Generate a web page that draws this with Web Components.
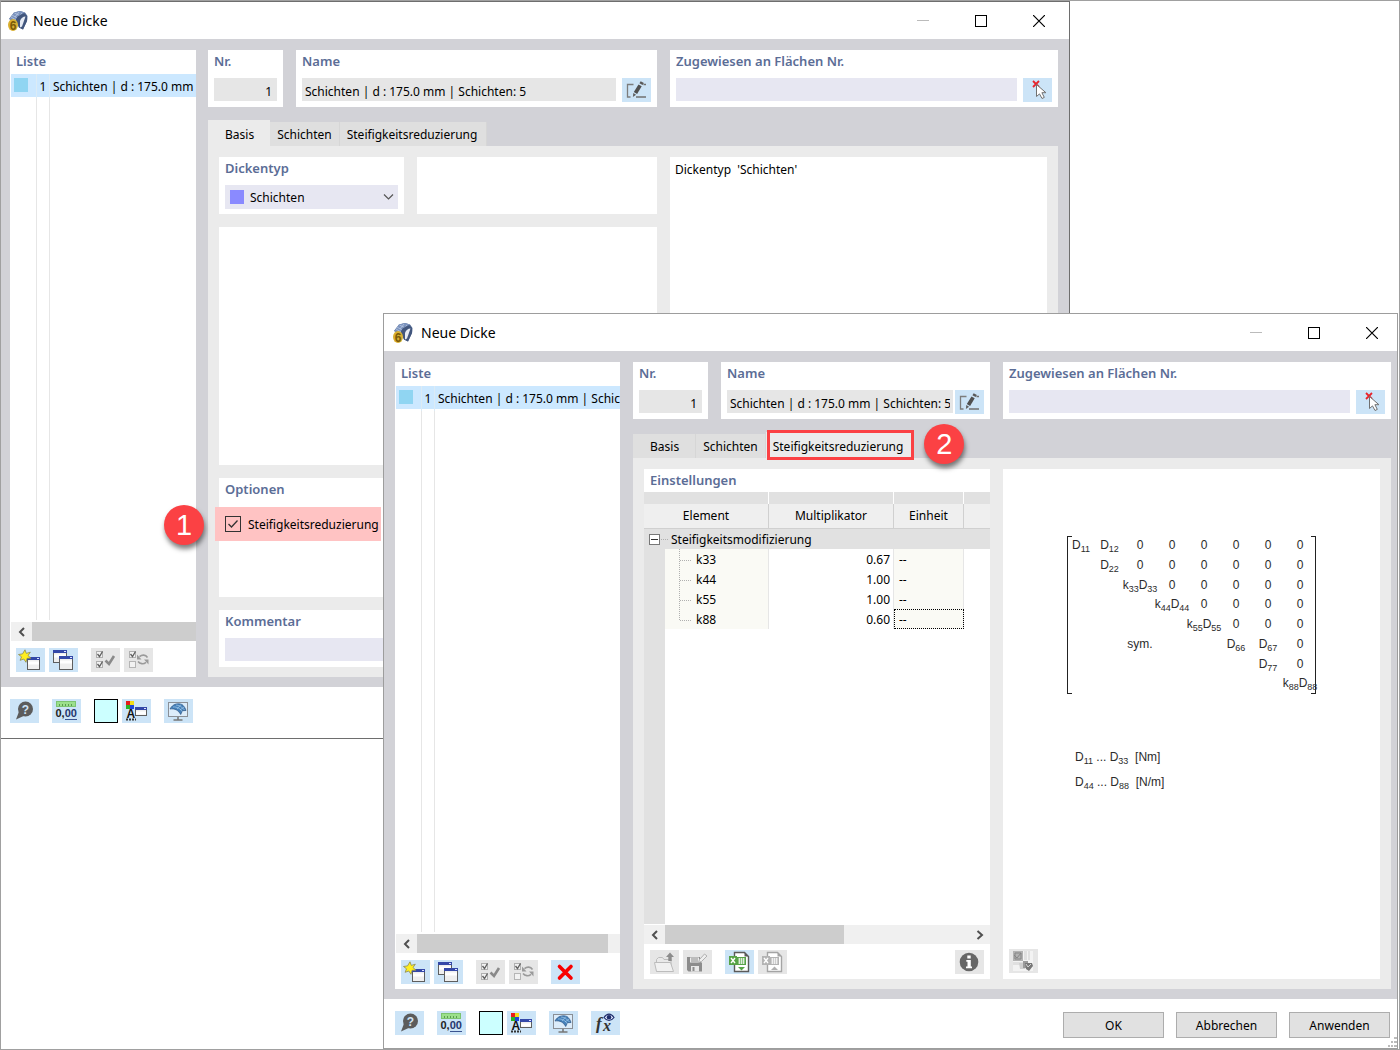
<!DOCTYPE html>
<html lang="de">
<head>
<meta charset="utf-8">
<title>Neue Dicke</title>
<style>
  html, body { margin: 0; min-height: 100%; background: #fff; }
  body { font: 12px/20px "Noto Sans", "Open Sans", sans-serif; color: #000; }
</style>
</head>
<body>
<thickness-desktop></thickness-desktop>

<script>
const BASE = `
  :host { display: block; box-sizing: border-box; min-width: 0; }
  *, *::before, *::after { box-sizing: border-box; }
  button, input, select { font: inherit; color: inherit; margin: 0; border: 0; border-radius: 0; padding: 0; }
  label, h2, h3 { margin: 0; }
  .caption { display: block; height: 23px; padding: 0 6px; font-size: 13px; line-height: 23px; font-weight: 600; color: #5b6d96; white-space: nowrap; }
`;

function define(name, css, html) {
  customElements.define(name, class extends HTMLElement {
    connectedCallback() {
      if (this.shadowRoot) return;
      const root = this.attachShadow({ mode: 'open' });
      const markup = typeof html === 'function' ? html(this) : html;
      const template = document.createElement('template');
      template.innerHTML = `<style>${BASE}${css}</style>${markup}`;
      root.append(template.content.cloneNode(true));
    }
  });
}

/* ---------- icons ---------- */
const miniWindow = (x, y, w, h) => `
  <rect x="${x + .5}" y="${y + .5}" width="${w - 1}" height="${h - 1}" fill="#efefef" stroke="#5e5e5e"/>
  <path d="M${x + 1} ${y + 4.5}h${w - 2}v3h-${w - 2}z" fill="#fff"/>
  <rect x="${x}" y="${y}" width="${w}" height="3" fill="#3448a8"/>
  <rect x="${x + w - 3}" y="${y + 1}" width="2" height="1" fill="#dfe4ff"/>`;
const tick = (x, y) => `
  <rect x="${x + .5}" y="${y + .5}" width="6" height="6" fill="#f2f2f2" stroke="#b0b0b0"/>
  <path d="M${x + 1.5} ${y + 3}l2 2.5 3-5" fill="none" stroke="#606060" stroke-width="1.3"/>`;
const sheet = (page, tint) => `
  <path d="M9.500 2.500h10l4 4v15h-14z" fill="#fff" stroke="${page}" stroke-width="1.4"/>
  <path d="M19.500 2.500v4h4z" fill="${page}"/>
  <rect x="11" y="7" width="10" height="8" fill="${tint}"/>
  <path d="M13 9h7M13 11h7M13 13h7M14.500 8v6M16.500 8v6M18.500 8v6" stroke="#fff" stroke-width=".7"/>
  <rect x="4" y="6" width="8" height="9" fill="${tint}"/>
  <path d="M6 8l4 5M10 8l-4 5" stroke="#fff" stroke-width="1.4"/>`;
const ICONS = {
  edit: `<path d="M11.500 6.500h-6V19h3" fill="none" stroke="#7c7c7c" stroke-width="1.3"/><path d="M14 19h10M21.500 6.500h2.500" stroke="#707070" stroke-width="1.3"/>
    <path d="M16.500 6.500l3.200 1.800-4.600 7.600-3.300-1.900z" fill="#505050"/><path d="M17.400 5.200l1.300-2 3.200 1.800-1.300 2z" fill="#5a5a5a"/><path d="M11.300 15l2.800 1.700-3.200 2.300z" fill="#5f5f5f"/>`,
  pick: `<path d="M10 3l6 6M16 3l-6 6" stroke="#e8242b" stroke-width="1.8"/>
    <path d="M13.500 6.500v12l3-2.600 2.500 4.600 2.300-1.100-2.400-4.700h4z" fill="#fff" stroke="#707070"/>`,
  create: `${miniWindow(11, 9, 13, 13)}<path d="M9 1.800l1.300 3.600 4-1.200-2.300 3.400 3 2.600-4 .1-1 4-2.200-3.300-3.700 1.300 1.400-3.500-3-2.300 4-.6z" fill="#ffee20" stroke="#8b8a50" stroke-width=".8"/>`,
  copy: miniWindow(4, 2, 14, 13) + miniWindow(10, 8, 14, 14),
  checkAll: tick(5, 3) + tick(5, 13) + `<path d="M14.500 12.500l3.500 3.500 5-8" fill="none" stroke="#8a8a8a" stroke-width="2.6"/>`,
  toggle: tick(5, 3) + `<rect x="5.500" y="13.500" width="6" height="6" fill="#f2f2f2" stroke="#b5b5b5"/>
    <path d="M23.500 9.500c-2-3-5.500-3-8-.8M14 13.500c2 2.500 5.500 3 8 .8" fill="none" stroke="#9a9a9a" stroke-width="1.600"/><path d="M13 6.500v5h4.500zM24.500 16.500v-5H20z" fill="#9a9a9a"/>`,
  remove: `<path d="M8.500 6.500L20 18M20 6.500L8.500 18" stroke="#f90000" stroke-width="3.600" stroke-linecap="round"/>`,
  help: `<path d="M6 20.500l3-8 5.200 4.300z" fill="#5c5c5c"/><circle cx="15.500" cy="10" r="7.500" fill="#5c5c5c"/>
    <text x="15.500" y="14.500" text-anchor="middle" font-family="Liberation Sans" font-weight="700" font-size="12" fill="#d0e4f6">?</text>`,
  decimals: `<rect x="4.500" y="2.500" width="19" height="5" fill="#9be08c" stroke="#7cc470"/><path d="M7.500 5v2M10.500 5v2M13.500 5v2M16.500 5v2M19.500 5v2" stroke="#5a9b50"/>
    <text x="3.500" y="18" font-family="Liberation Sans" font-size="11" font-weight="700" fill="#222">0,<tspan fill="#24366e">00</tspan></text><path d="M13 20.500h12" stroke="#3a5390"/>`,
  display: `<path d="M4 2h4v4h-4z" fill="#e81c1c"/><path d="M8 2h4v4h-4z" fill="#f4dc18"/><path d="M4 6h4v4h-4z" fill="#28b428"/><path d="M8 6h4v4h-4z" fill="#1f45d8"/>
    <text x="4.500" y="19" font-family="Liberation Sans" font-weight="700" font-size="12" fill="#111">A</text><path d="M4 20.500h10" stroke="#333" stroke-width="2" stroke-dasharray="2 1"/>${miniWindow(13, 8, 12, 9)}`,
  monitor: `<rect x="4.500" y="3.500" width="19" height="14" fill="#dcecfa" stroke="#8a8f96"/><path d="M14 18v3M9.500 21h9" stroke="#777" stroke-width="1.600"/>
    <path d="M6 10C8.500 5 14 3.800 18 5.500c2 1.500 3.500 4 4 6l-3.500.2-1.800 3.800C14.500 11.500 11 9.200 6 10z" fill="#4580ba" stroke="#2b5484" stroke-width=".7"/><path d="M9 8c4-.5 8 2 9.500 5M12 6c3 0 6 2 8.500 5M17 5.500l-4 4.500M20 8l-4 3" stroke="#b4d6f2" stroke-width=".6" fill="none"/>`,
  fx: `<text x="5" y="18" font-family="Liberation Serif" font-style="italic" font-weight="700" font-size="17" fill="#333">f</text>
    <text x="12" y="20" font-family="Liberation Serif" font-style="italic" font-weight="700" font-size="16" fill="#333">x</text>
    <path d="M13 6.500c3-4.500 7-4.500 10 0-3 4-7 4-10 0z" fill="#dfe8ff" stroke="#1d2c6b" stroke-width="1.200"/><circle cx="18" cy="6.300" r="2.300" fill="#1d2c6b"/>`,
  open: `<path d="M6.500 21.500v-12l2-2h4l1.500 2h7v12z" fill="#e9e9e9" stroke="#bcbcbc"/><path d="M6.500 21.500l-2-9h16l3 9z" fill="#f1f1f1" stroke="#bcbcbc"/><path d="M20 2.500l4 4.500h-2.300v4h-3.400V7H16z" fill="#8c8c8c"/>`,
  save: `<path d="M4 7h13v4l2 2v8.500H5.500L4 20z" fill="#8c8c8c"/><path d="M7 7.500h9v5H7z" fill="#ececec"/><path d="M8 9h7M8 11h7" stroke="#8c8c8c"/><path d="M8 16h8v5.500H8z" fill="#e8e8e8"/><path d="M9.500 17h2v4h-2z" fill="#8c8c8c"/>
    <path d="M15.500 12.500l1-3 5-5.500 2.500 2-5.500 5.500z" fill="#eee" stroke="#b0b0b0"/>`,
  importSheet: sheet('#5a5a5a', '#57a347') + `<path d="M13 17h7l-3.500 3.500z" fill="#57a347"/>`,
  exportSheet: sheet('#a4a4a4', '#b4b4b4') + `<path d="M13 20h7l-3.500-3.500z" fill="#b0b0b0"/>`,
  info: `<circle cx="14" cy="12" r="9.300" fill="#666"/><path d="M12.300 5.500h3.400v3h-3.400zM11.300 10h4.500v6.500H17v1.800h-6v-1.800h1.500v-4.700h-1.200z" fill="#fff"/>`,
  image: `<rect x="4" y="2" width="20" height="20" fill="#f3f3f3"/><path d="M15 2h3v9h-3zM19 2h2v9h-2zM4 13h10v3H4z" fill="#e0e0e0"/><rect x="4" y="2" width="10" height="10" fill="#b2b2b2"/><path d="M5 6l3 3 4-5M6 4h6v6H6z" fill="none" stroke="#858585"/>
    <path d="M10 14h6v6h-5z" fill="#d0d0d0"/><path d="M14 12h5v7h-5z" fill="#9b9b9b"/><path d="M16 14h7l1 3-4 5-3-2z" fill="#777"/><path d="M17 15l2 3 3-3" stroke="#d4d4d4" fill="none"/>`
};
define('ui-icon', `:host{width:29px;height:24px} svg{display:block}`,
  el => `<svg width="29" height="24" viewBox="0 0 29 24" aria-hidden="true">${ICONS[el.getAttribute('name')]}</svg>`);

define('icon-button', `
  :host { flex: none; }
  button { display: block; width: 29px; height: 24px; background: #cce4f7; }
  button:disabled { background: #e6e6e6; }`,
  el => `<button type="button" aria-label="${el.getAttribute('label')}" ${el.hasAttribute('off') ? 'disabled' : ''}><ui-icon name="${el.getAttribute('icon')}"></ui-icon></button>`);

define('color-button', `
  :host { flex: none; }
  button { display: block; width: 24px; height: 24px; border: 1px solid #000; background: #ccffff; }`,
  `<button type="button" aria-label="Farbe"></button>`);

define('push-button', `
  button { display: block; width: 101px; height: 26px; padding-top: 2px; border: 1px solid #adadad; background: #e1e1e1; line-height: 22px; }`,
  `<button type="button"><slot></slot></button>`);

define('tool-strip', `
  :host { display: flex; align-items: flex-start; gap: 4px; }
  ::slotted(.apart) { margin-left: 9px; }
  ::slotted(.end) { margin-left: auto; }`, `<slot></slot>`);

/* ---------- window ---------- */
define('app-window', `
  :host { display: flex; flex-direction: column; background: #fff; border: 1px solid #9d9d9d; }
  header { display: flex; align-items: center; height: 37px; flex: none; padding: 0 var(--controls-end) 0 var(--title-start); }
  h2 { flex: 1; padding-left: var(--title-gap); font-size: 14px; line-height: 22px; font-weight: 400; }
  .controls { display: flex; gap: 12px; }
  .controls button { width: 46px; height: 30px; background: none; display: grid; place-items: center; }
  main { flex: 1; min-height: 0; display: flex; background: #d2d2d7; padding: 11px var(--body-end) 10px var(--body-start); gap: var(--body-gap); }
  footer { flex: none; height: var(--footer-height); padding: 12px 7px 10px var(--body-start); display: flex; justify-content: space-between; position: relative; }
  .actions { display: flex; gap: 12px; align-self: flex-end; }
  .grip { position: absolute; right: 0; bottom: 0; }`,
  el => `
  <header>
    <svg width="20" height="20" viewBox="0 0 20 20" aria-hidden="true">
      <path d="M1 8l5-6.500L12 0l5 1.500 2.500 3.500-.5 5-4 8.500-4-2-3-7-5-.5z" fill="#4f6690"/>
      <path d="M6 1.500L12 0l5 1.500-6 2.500zM1 8l5-6.500L11 4 7 9.500z" fill="#7d94bf"/>
      <path d="M4 4l5 3M6.500 2l5 2.500M9 8l5-6M7 6l4-5M3 6l5 3" stroke="#bccbe4" stroke-width=".7"/>
      <path d="M8 10c0-4 3-6.500 8-7 3 1 3.500 3.500 3 7l-4 8.500-4-2z" fill="#42567d"/><path d="M12 10c1-3 3-4.500 5.500-4.500L14 15.500l-2 1z" fill="#e6ebf4"/>
      <ellipse cx="5" cy="14" rx="5" ry="6" fill="#d9b032"/>
      <text x="5" y="18.500" text-anchor="middle" font-family="Liberation Sans" font-size="12" font-weight="700" fill="#7a5a08">6</text>
    </svg>
    <h2>${el.getAttribute('caption')}</h2>
    <div class="controls">
      <button type="button" aria-label="Minimieren"><svg width="12" height="12"><path d="M0 5.500h12" stroke="#bbb"/></svg></button>
      <button type="button" aria-label="Maximieren"><svg width="12" height="12"><rect x=".5" y=".5" width="11" height="11" fill="none" stroke="#000"/></svg></button>
      <button type="button" aria-label="Schließen"><svg width="12" height="12"><path d="M0 0l12 12M12 0L0 12" stroke="#000" stroke-width="1.200"/></svg></button>
    </div>
  </header>
  <main><slot></slot></main>
  <footer>
    <slot name="tools"></slot>
    <div class="actions"><slot name="actions"></slot></div>
    ${el.hasAttribute('resizable') ? `<svg class="grip" width="9" height="11"><path d="M6 1h3M3 5h2M6 5h3M0 9h2M3 9h2M6 9h3" stroke="#bbb" stroke-width="2"/></svg>` : ''}
  </footer>`);

/* ---------- scroll bar ---------- */
define('scroll-row', `
  :host { display: flex; height: 19px; background: #f0f0f0; flex: none; }
  button { width: 21px; height: 19px; background: none; display: grid; place-items: center; flex: none; }
  .track { flex: 1; display: flex; }
  .thumb { width: var(--thumb, 100%); background: #cdcdcd; }
  path { fill: none; stroke: #505050; stroke-width: 2; }`,
  el => `<button type="button" aria-label="Nach links"><svg width="8" height="10"><path d="M6 1L2 5l4 4"/></svg></button>
  <div class="track"><div class="thumb"></div></div>
  ${el.hasAttribute('both') ? `<button type="button" aria-label="Nach rechts"><svg width="8" height="10"><path d="M1.500 1L6 5 1.500 9"/></svg></button>` : ''}`);

/* ---------- list ---------- */
define('list-panel', `
  :host { display: flex; flex-direction: column; background: #fff; padding-bottom: 5px; overflow: hidden; flex: none; }
  .items { flex: 1; margin: 1px 0 2px; padding: 0 0 0 1px; list-style: none; overflow: hidden;
    background: linear-gradient(#e6e6e6, #e6e6e6) 26px 0 / 1px 100% no-repeat, linear-gradient(#e6e6e6, #e6e6e6) 39px 0 / 1px 100% no-repeat; }
  li { display: grid; grid-template-columns: 25px 14px 1fr; height: 23px; background: #cce8ff; line-height: 25px; white-space: nowrap; }
  i { width: 14px; height: 14px; margin: 4px 3px; background: #90d5f2; }
  .no { text-align: center; border-left: 1px solid #dcebf5; border-right: 1px solid #dcebf5; }
  .name { padding-left: 3px; }
  scroll-row { margin-left: 1px; }
  ::slotted(tool-strip) { padding: 7px 6px 0; }`,
  el => `<h3 class="caption">Liste</h3>
  <ul class="items"><li><i></i><span class="no">1</span><span class="name">${el.getAttribute('item')}</span></li></ul>
  <scroll-row></scroll-row><slot></slot>`);

/* ---------- groups and fields ---------- */
define('group-box', `:host{background:#fff; display:flex; flex-direction:column}`,
  el => `${el.hasAttribute('caption') ? `<h3 class="caption">${el.getAttribute('caption')}</h3>` : ''}<slot></slot>`);

define('field-group', `
  :host { background: #fff; height: 57px; }
  .row { display: flex; gap: var(--field-gap, 6px); padding: 5px 6px 0; }
  input { flex: 1; min-width: 0; width: 0; height: 23px; padding: 3px 3px 0; background: #e7e7f2; outline: 0; }
  :host([tone=gray]) input { background: #e6e6e6; }
  :host([numeric]) input { text-align: right; padding-right: 5px; }`,
  el => `<label class="caption" for="field">${el.getAttribute('caption')}</label>
  <div class="row"><input id="field" type="text" value="${el.getAttribute('value') || ''}"><slot></slot></div>`);

define('type-group', `
  :host { background: #fff; height: 57px; }
  .row { margin: 5px 6px 0; height: 24px; background: #e7e7f2; display: grid; grid-template-columns: 25px 1fr 15px; align-items: center; }
  select { grid-row: 1; grid-column: 1 / -1; width: 100%; height: 24px; padding: 1px 0 0 25px; appearance: none; background: none; }
  i { grid-row: 1; grid-column: 1; width: 14px; height: 14px; margin-left: 5px; background: #8a8aff; }
  svg { grid-row: 1; grid-column: 3; pointer-events: none; }`,
  `<label class="caption" for="type">Dickentyp</label>
  <div class="row"><i></i><select id="type"><option>Schichten</option></select>
  <svg width="12" height="8"><path d="M1 1.500l4.500 4.500L10 1.500" fill="none" stroke="#555" stroke-width="1.200"/></svg></div>`);

/* ---------- step badge ---------- */
define('step-badge', `
  :host { width: 40px; height: 40px; border-radius: 50%; background: #fb4144; color: #fff; box-shadow: 1px 4px 5px rgba(0,0,0,.5);
    font: 29px/40px "Liberation Sans", Arial, sans-serif; text-align: center; }`, `<slot></slot>`);

define('option-check', `
  :host { position: relative; width: 166px; height: 34px; margin: 6px 0 0 -4px; background: #ffc3c3; }
  label { display: flex; align-items: center; height: 34px; padding-left: 10px; gap: 7px; white-space: nowrap; line-height: 22px; }
  .text { padding-top: 2px; }
  .box { display: grid; flex: none; }
  .box > * { grid-area: 1 / 1; }
  input { appearance: none; width: 16px; height: 16px; border: 1px solid #333; }
  svg { visibility: hidden; pointer-events: none; }
  input:checked + svg { visibility: visible; }
  step-badge { position: absolute; left: -51px; top: -2px; }`,
  `<label><span class="box"><input type="checkbox" checked><svg width="16" height="16"><path d="M3.500 8l3 3 6-6.500" fill="none" stroke="#333" stroke-width="1.300"/></svg></span><span class="text">Steifigkeitsreduzierung</span></label>
  <step-badge>1</step-badge>`);

/* ---------- tabs ---------- */
define('tab-pane', `
  :host { display: flex; flex-direction: column; flex: 1; min-height: 0; }
  nav { display: flex; align-items: flex-end; height: 26px; }
  .tab { position: relative; flex: none; }
  button { display: block; height: 24px; padding: 0 7px; background: #dfdfdf; border-right: 1px solid #d6d6d6; line-height: 26px; white-space: nowrap; }
  .tab:first-child button { padding: 0 16px 0 17px; }
  .tab:last-child button { padding-right: 9px; }
  .on button { height: 26px; background: #ebebeb; border-right: 0; line-height: 30px; }
  .mark { position: absolute; inset: -2px -2px -2px 1px; border: 3px solid #fb4144; pointer-events: none; }
  step-badge { position: absolute; left: calc(100% + 12px); top: -8px; z-index: 1; }
  .page { flex: 1; min-height: 0; background: #ebebeb; padding: 11px 11px 10px; display: grid; grid-template-columns: 1fr 377px; gap: 13px; }`,
  el => {
    const active = Number(el.getAttribute('active'));
    return `<nav role="tablist">${['Basis', 'Schichten', 'Steifigkeitsreduzierung'].map((name, i) => `
      <div class="tab ${i === active ? 'on' : ''}"><button type="button" role="tab" aria-selected="${i === active}">${name}</button>
      ${el.hasAttribute('step') && i === active ? `<span class="mark"></span><step-badge>${el.getAttribute('step')}</step-badge>` : ''}</div>`).join('')}</nav>
    <div class="page"><slot></slot></div>`;
  });

define('thickness-editor', `
  :host { flex: 1; display: flex; flex-direction: column; gap: 13px; }
  .top { display: grid; grid-template-columns: 75px 1fr 388px; gap: 13px; }
  .top .name { --field-gap: var(--name-gap, 6px); }`,
  `<div class="top">
    <field-group caption="Nr." value="1" tone="gray" numeric></field-group>
    <field-group class="name" caption="Name" value="Schichten | d : 175.0 mm | Schichten: 5" tone="gray"><icon-button icon="edit" label="Name bearbeiten"></icon-button></field-group>
    <field-group caption="Zugewiesen an Flächen Nr."><icon-button icon="pick" label="Flächen auswählen"></icon-button></field-group>
  </div><slot></slot>`);

/* ---------- basic page ---------- */
define('basis-form', `
  :host { display: flex; flex-direction: column; gap: 13px; }
  .pair { display: grid; grid-template-columns: 185px 1fr; gap: 13px; }
  .space { flex: 1; } .options { height: 119px; }`,
  `<div class="pair"><type-group></type-group><group-box></group-box></div>
  <group-box class="space"></group-box>
  <group-box class="options" caption="Optionen"><option-check></option-check></group-box>
  <field-group caption="Kommentar"></field-group>`);

/* ---------- settings table ---------- */
const ROWS = [['k33', '0.67'], ['k44', '1.00'], ['k55', '1.00'], ['k88', '0.60']];
define('settings-table', `
  :host { display: flex; flex-direction: column; background: #fff; padding-bottom: 5px; }
  .area { flex: 1; margin-bottom: 1px; background: linear-gradient(#e1e1e1, #e1e1e1) 0 0 / 21px 100% no-repeat; }
  table { width: 100%; table-layout: fixed; border-collapse: separate; border-spacing: 0; }
  th, td { padding: 0; font-weight: 400; white-space: nowrap; }
  .strip th { height: 12px; background: #e1e1e1; border-right: 1px solid #fff; }
  .head th { height: 25px; line-height: 24px; background: #efefef; border-right: 1px solid #d0d0d0; border-bottom: 1px solid #d0d0d0; }
  tr > th:last-child { border-right: 0; }
  .group td { height: 20px; background: #e1e1e1; }
  .flex { display: flex; align-items: center; height: 20px; line-height: 18px; }
  .flex span { padding-top: 2px; }
  .group button { width: 11px; height: 11px; margin-left: 5px; border: 1px solid #777; background: #fff; display: grid; place-items: center; }
  .group .dots { margin: 0 1px; }
  .item td { height: 20px; line-height: 18px; padding-top: 2px; border-right: 1px solid #e6e6e6; }
  .item .element { background: #fafaf5; padding-top: 0; }
  .element .flex { gap: 4px; }
  .item .value { text-align: right; padding-right: 3px; }
  .item .unit { background: #fafaf5; padding-left: 5px; }
  .item td:first-child, .item td:last-child { border: 0; }
  .item:last-child .unit { outline: 1px dotted #000; outline-offset: -1px; }
  .dots { fill: none; stroke: #b0b0b0; stroke-dasharray: 1 1; }
  scroll-row { --thumb: 59%; }
  tool-strip { padding: 6px 6px 0; }
  .apart { margin-left: 9px; } .end { margin-left: auto; }`,
  `<h3 class="caption">Einstellungen</h3>
  <div class="area"><table>
    <colgroup><col style="width:21px"><col style="width:104px"><col style="width:125px"><col style="width:70px"><col></colgroup>
    <thead><tr class="strip"><th colspan="2"></th><th></th><th></th><th></th></tr>
    <tr class="head"><th colspan="2">Element</th><th>Multiplikator</th><th>Einheit</th><th></th></tr></thead>
    <tbody><tr class="group"><td colspan="5"><div class="flex"><button type="button" aria-label="Zuklappen"><svg width="7" height="1"><path d="M0 .5h7" stroke="#333"/></svg></button><svg class="dots" width="9" height="1"><path d="M0 .5h7"/></svg><span>Steifigkeitsmodifizierung</span></div></td></tr>
    ${ROWS.map(([name, value], i) => `<tr class="item"><td></td><td class="element"><div class="flex"><svg class="dots" width="27" height="20"><path d="M14.500 0V${i === ROWS.length - 1 ? 11 : 20}M15 11.500H27"/></svg><span>${name}</span></div></td><td class="value">${value}</td><td class="unit">--</td><td></td></tr>`).join('')}
    </tbody></table></div>
  <scroll-row both></scroll-row>
  <tool-strip>
    <icon-button icon="open" label="Öffnen" off></icon-button><icon-button icon="save" label="Speichern" off></icon-button>
    <icon-button class="apart" icon="importSheet" label="Excel-Import"></icon-button><icon-button icon="exportSheet" label="Excel-Export" off></icon-button>
    <icon-button class="end" icon="info" label="Info" off></icon-button>
  </tool-strip>`);

/* ---------- stiffness matrix ---------- */
const MATRIX = [
  'D11 D12 0 0 0 0 0 0', '. D22 0 0 0 0 0 0', '. . k33D33 0 0 0 0 0', '. . . k44D44 0 0 0 0',
  '. . . . k55D55 0 0 0', '. . sym. . . D66 D67 0', '. . . . . . D77 0', '. . . . . . . k88D88'];
const withSubs = text => text.replace(/([Dk])(\d\d)/g, '$1<sub>$2</sub>');
define('stiffness-matrix', `
  :host { display: flex; flex-direction: column; align-items: flex-start; background: #fff; padding: 67px 6px 6px; color: #2b2b2b; font: 12px/18px "Liberation Sans", Arial, sans-serif; }
  sub { font-size: 9px; line-height: 0; vertical-align: -3px; }
  .matrix { display: grid; grid-template-columns: 28px 29px repeat(6, 32px); grid-template-rows: repeat(8, 1fr); height: 158px; margin-left: 58px; }
  .cell { display: flex; justify-content: center; white-space: nowrap; }
  .bracket { grid-row: 1 / -1; width: 5px; border: 1px solid #222; }
  .left { grid-column: 1; border-right: 0; }
  .right { grid-column: 8; border-left: 0; justify-self: end; }
  .legend { margin: 51px 0 0 66px; line-height: 25px; white-space: pre; }
  icon-button { margin-top: auto; }`,
  `<div class="matrix"><i class="bracket left"></i><i class="bracket right"></i>
  ${MATRIX.map((row, r) => row.split(' ').map((cell, c) => cell === '.' ? '' : `<div class="cell" style="grid-area:${r + 1}/${c + 1}"><span>${withSubs(cell)}</span></div>`).join('')).join('')}</div>
  <div class="legend"><div>${withSubs('D11 ... D33')}  [Nm]</div><div>${withSubs('D44 ... D88')}  [N/m]</div></div>
  <icon-button icon="image" label="Bild" off></icon-button>`);

/* ---------- desktop ---------- */
const footerTools = more => `<tool-strip slot="tools">
  <icon-button icon="help" label="Hilfe"></icon-button><icon-button class="apart" icon="decimals" label="Einheiten und Dezimalstellen"></icon-button>
  <color-button class="apart"></color-button><icon-button icon="display" label="Anzeigeeigenschaften"></icon-button>
  <icon-button class="apart" icon="monitor" label="Ansicht"></icon-button>${more}</tool-strip>`;
const listTools = more => `<tool-strip>
  <icon-button icon="create" label="Neu"></icon-button><icon-button icon="copy" label="Kopieren"></icon-button>
  <icon-button class="apart" icon="checkAll" label="Alle auswählen" off></icon-button><icon-button icon="toggle" label="Auswahl umkehren" off></icon-button>${more}</tool-strip>`;
define('thickness-desktop', `
  :host { position: relative; height: 100vh; border: 1px solid #a0a0a0; background: #fff; overflow: hidden; }
  app-window { position: absolute; }
  .back { inset: 0 329px 310px 0; border-color: #6e6e6e; border-left: 0; --title-start: 7px; --title-gap: 5px; --controls-end: 7px;
    --body-start: 9px; --body-end: 11px; --body-gap: 12px; --footer-height: 51px; }
  .front { inset: 312px 1px 0 382px; --title-start: 9px; --title-gap: 8px; --controls-end: 2px;
    --body-start: 11px; --body-end: 6px; --body-gap: 13px; --footer-height: 49px; --name-gap: 2px; }
  .back list-panel { width: 186px; }
  .front list-panel { width: 225px; --thumb: 94%; }
  .note { background: #fff; padding: 3px 5px; white-space: pre; }`,
  `<app-window class="back" caption="Neue Dicke">
    <list-panel item="Schichten | d : 175.0 mm">${listTools('')}</list-panel>
    <thickness-editor><tab-pane active="0"><basis-form></basis-form><div class="note">Dickentyp  'Schichten'</div></tab-pane></thickness-editor>
    ${footerTools('')}
  </app-window>
  <app-window class="front" caption="Neue Dicke" resizable>
    <list-panel item="Schichten | d : 175.0 mm | Schic">${listTools('<icon-button class="apart" icon="remove" label="Löschen"></icon-button>')}</list-panel>
    <thickness-editor><tab-pane active="2" step="2"><settings-table></settings-table><stiffness-matrix></stiffness-matrix></tab-pane></thickness-editor>
    ${footerTools('<icon-button class="apart" icon="fx" label="Formel"></icon-button>')}
    <push-button slot="actions">OK</push-button><push-button slot="actions">Abbrechen</push-button><push-button slot="actions">Anwenden</push-button>
  </app-window>`);
</script>
</body>
</html>
